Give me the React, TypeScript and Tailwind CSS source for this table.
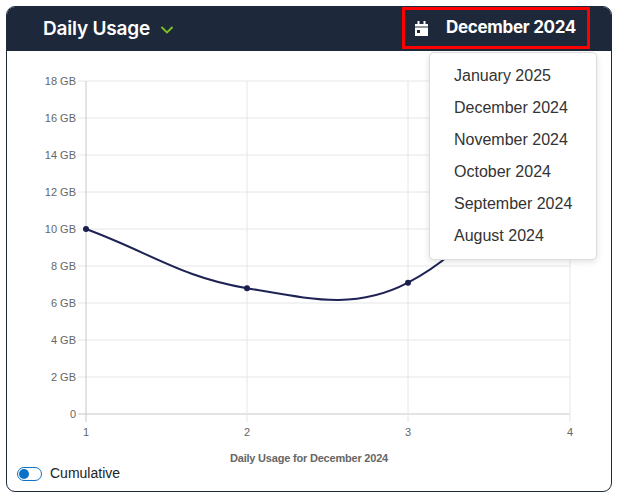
import React from "react";

const X = [86, 247, 408, 570];
const VALUES = [10, 6.8, 7.1, 16];
const yOf = (v: number) => 414 - v * 18.5;

function buildPath(): string {
  const pts = VALUES.map((v, i) => [X[i], yOf(v)] as [number, number]);
  const t = 0.4;
  const cps: { prev: [number, number]; next: [number, number] }[] = pts.map((p, i) => {
    const prev = pts[Math.max(0, i - 1)];
    const next = pts[Math.min(pts.length - 1, i + 1)];
    const d01 = Math.hypot(p[0] - prev[0], p[1] - prev[1]);
    const d12 = Math.hypot(next[0] - p[0], next[1] - p[1]);
    const tot = d01 + d12 || 1;
    const fa = (t * d01) / tot;
    const fb = (t * d12) / tot;
    return {
      prev: [p[0] - fa * (next[0] - prev[0]), p[1] - fa * (next[1] - prev[1])],
      next: [p[0] + fb * (next[0] - prev[0]), p[1] + fb * (next[1] - prev[1])],
    };
  });
  let d = `M ${pts[0][0]} ${pts[0][1]}`;
  for (let i = 1; i < pts.length; i++) {
    const a = cps[i - 1].next;
    const b = cps[i].prev;
    d += ` C ${a[0]} ${a[1]} ${b[0]} ${b[1]} ${pts[i][0]} ${pts[i][1]}`;
  }
  return d;
}

function Chart() {
  const yTicks = [0, 2, 4, 6, 8, 10, 12, 14, 16, 18];
  const font = "'Liberation Sans', Arial, sans-serif";
  return (
    <svg width={604} height={413} viewBox="7 51 604 413" className="block shrink-0">
      {yTicks.map((v) => (
        <g key={v}>
          <line x1={78} x2={570} y1={yOf(v * 1)} y2={yOf(v * 1)} stroke={v === 0 ? "#c8c8c8" : "#e6e6e6"} strokeWidth={1} />
          <text x={76} y={yOf(v) + 4} textAnchor="end" fontSize={11} fill="#666" fontFamily={font}>
            {v === 0 ? "0" : `${v} GB`}
          </text>
        </g>
      ))}
      {X.map((x, i) => (
        <g key={x}>
          <line x1={x} x2={x} y1={yOf(18)} y2={422} stroke={i === 0 ? "#c8c8c8" : "#e6e6e6"} strokeWidth={1} />
          <text x={x} y={436} textAnchor="middle" fontSize={11} fill="#666" fontFamily={font}>
            {i + 1}
          </text>
        </g>
      ))}
      <path d={buildPath()} fill="none" stroke="#1e2255" strokeWidth={2} />
      {VALUES.map((v, i) => (
        <circle key={i} cx={X[i]} cy={yOf(v)} r={3} fill="#1a1f4e" />
      ))}
      <text x={309} y={462} textAnchor="middle" fontSize={11} fontWeight="bold" fill="#666" fontFamily={font} letterSpacing={-0.2}>
        Daily Usage for December 2024
      </text>
    </svg>
  );
}

export default function App() {
  const months = ["January 2025", "December 2024", "November 2024", "October 2024", "September 2024", "August 2024"];
  return (
    <div className="w-[619px] h-[500px] bg-white pt-[6px] pl-[6px]">
      <div className="relative w-[606px] h-[486px] border border-[#1e2a3c] rounded-[9px] overflow-visible flex flex-col">
        <div className="h-[44px] shrink-0 bg-[#1e283b] rounded-t-[8px] flex items-center justify-between pl-[36px] pr-[21px]">
          <div className="flex items-center gap-[10px]" style={{ fontFamily: "Inter, 'Open Sans', sans-serif" }}>
            <span className="text-white text-[19px] font-semibold tracking-[-0.2px]">Daily Usage</span>
            <svg width="14" height="10" viewBox="0 0 14 10" className="mt-[2px]">
              <path d="M1.5 2 L7 7.5 L12.5 2" fill="none" stroke="#7cc521" strokeWidth="1.8" />
            </svg>
          </div>
          <div className="h-[42px] w-[188px] border-[3px] border-[#ff0000] flex items-center pl-[10px] self-start" style={{ fontFamily: "Inter, 'Open Sans', sans-serif" }}>
            <svg width="13" height="15" viewBox="0 0 13 15">
              <rect x="2.5" y="0" width="2" height="3" fill="white" />
              <rect x="8.5" y="0" width="2" height="3" fill="white" />
              <path d="M0 3 H13 V15 H0 Z M2 9 V12 H5 V9 Z" fill="white" fillRule="evenodd" />
              <rect x="0" y="5.5" width="13" height="1" fill="#1e283b" />
            </svg>
            <span className="ml-[18px] text-white text-[17px] font-bold tracking-[-0.3px]">December 2024</span>
          </div>
        </div>
        <Chart />
        <div className="flex items-center gap-[8px] pl-[10px] -mt-[1px]">
          <div className="w-[25px] h-[14px] rounded-full border-[1.5px] border-[#0c72c6] flex items-center pl-[1px]">
            <div className="w-[10px] h-[10px] rounded-full bg-[#0c72c6]" />
          </div>
          <span className="text-[14px] text-[#222]" style={{ fontFamily: "'Liberation Sans', Arial, sans-serif" }}>Cumulative</span>
        </div>
        <div
          className="absolute left-[422px] top-[45px] w-[168px] bg-white border border-[#dcdcdc] rounded-[5px] shadow-[0_2px_6px_rgba(0,0,0,0.12)] py-[7px]"
          style={{ fontFamily: "'Liberation Sans', Arial, sans-serif" }}
        >
          {months.map((m) => (
            <div key={m} className="h-[32px] flex items-center pl-[24px] text-[16px] text-[#333]">
              {m}
            </div>
          ))}
        </div>
      </div>
    </div>
  );
}
